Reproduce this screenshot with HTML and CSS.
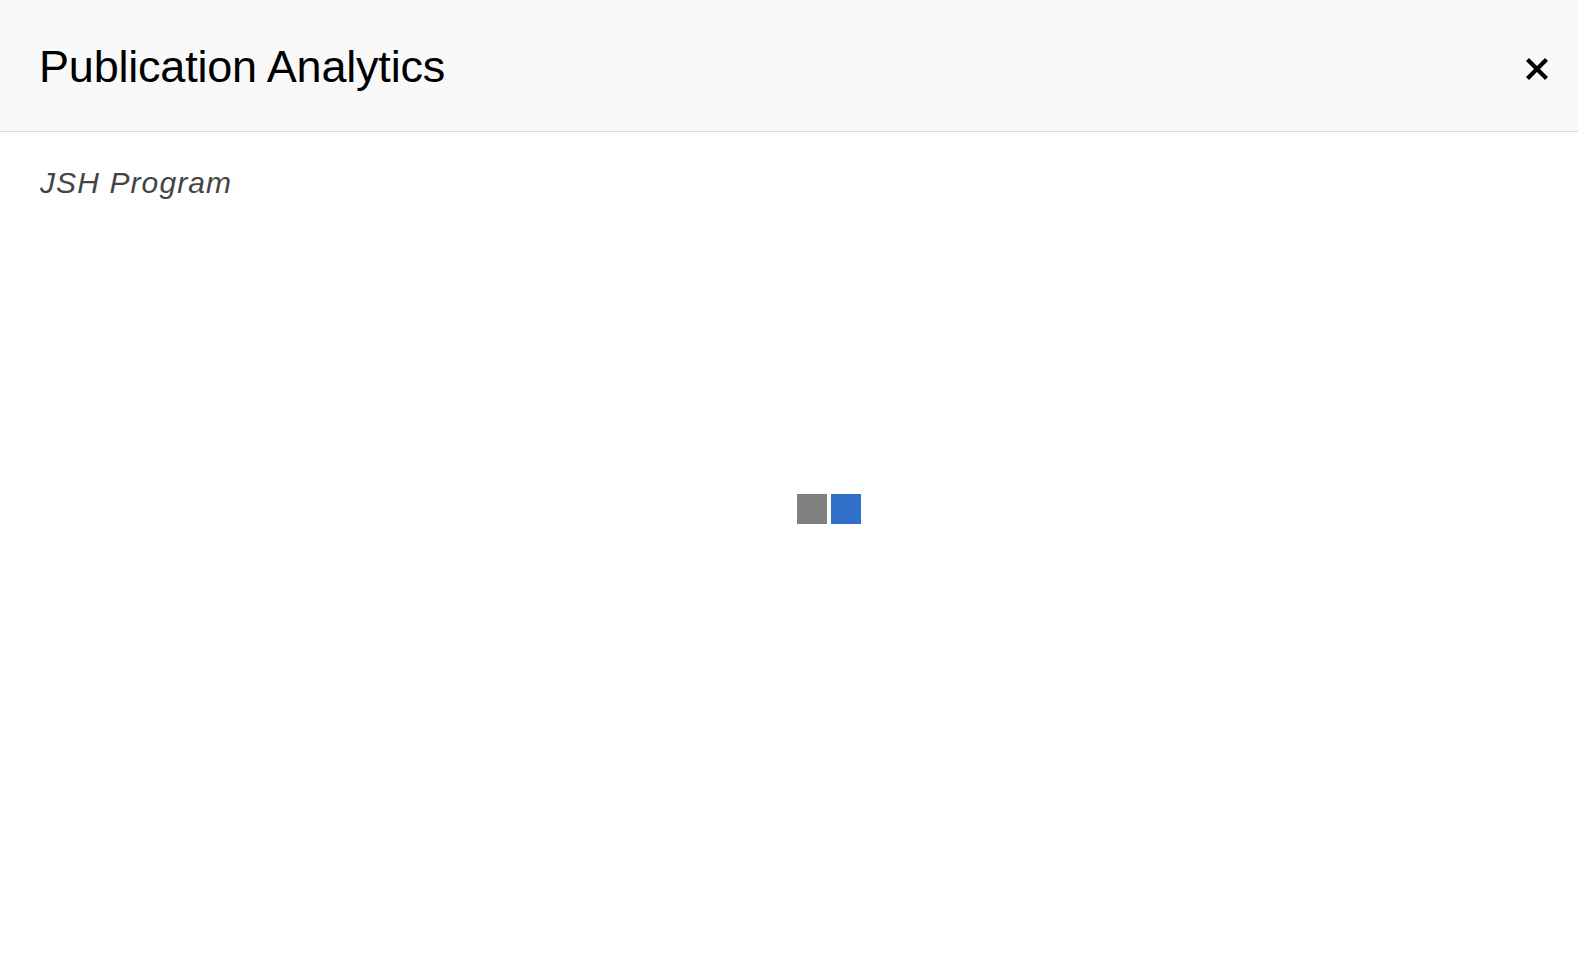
FILE: index.html
```html
<!DOCTYPE html>
<html>
<head>
<meta charset="utf-8">
<link rel="stylesheet" href="styles.css">
</head>
<body>
<div class="modal">
  <header class="modal-header">
    <h1 class="modal-title">Publication Analytics</h1>
    <button class="close" aria-label="Close">
      <svg width="22" height="22" viewBox="0 0 22 22"><path d="M3 3 L19 19 M19 3 L3 19" stroke="#000" stroke-width="4.2" stroke-linecap="square"/></svg>
    </button>
  </header>
  <main class="modal-body">
    <p class="subtitle">JSH Program</p>
    <div class="loader">
      <span class="sq gray"></span>
      <span class="sq blue"></span>
    </div>
  </main>
</div>
</body>
</html>
```
FILE: styles.css
```css
html, body { margin: 0; padding: 0; background: #fff; }
body { font-family: "Liberation Sans", Arial, Helvetica, sans-serif; }
.modal { width: 1578px; height: 964px; display: flex; flex-direction: column; }
.modal-header {
  height: 132px;
  box-sizing: border-box;
  background: #f9f9f9;
  border-bottom: 1px solid #d8d8d8;
  display: flex;
  align-items: center;
  justify-content: space-between;
  padding: 7px 30px 0 39px;
}
.modal-title { margin: 0 0 4px; font-weight: 400; font-size: 45px; line-height: 52px; color: #000; letter-spacing: -0.2px; }
.close { border: 0; background: transparent; padding: 0; width: 22px; height: 22px; display: flex; }
.modal-body { padding: 0 0 0 40px; flex: 1; }
.subtitle { margin: 0; padding-top: 34px; font-style: italic; font-size: 30px; line-height: 34px; letter-spacing: 1.1px; color: #444; }
.loader { display: flex; gap: 4px; margin: 294px 0 0 757px; }
.sq { width: 30px; height: 30px; display: block; }
.gray { background: #808080; }
.blue { background: #3070c9; }
```
